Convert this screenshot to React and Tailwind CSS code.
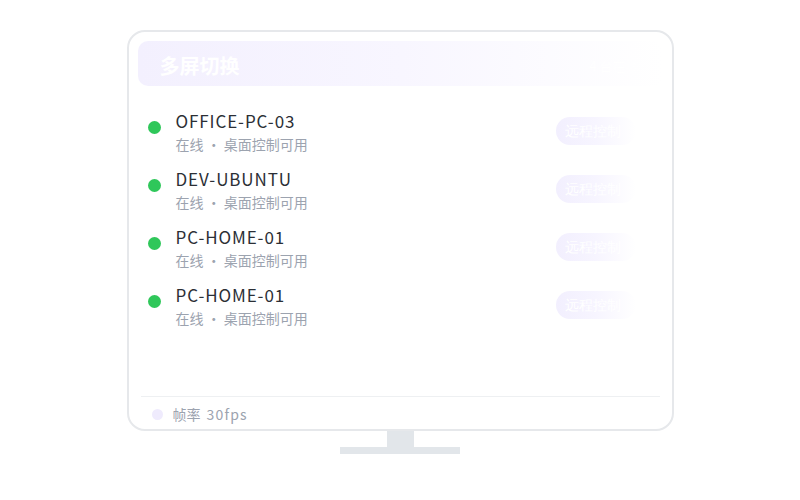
import React from 'react';

const devices = [
  { id: 1, name: 'OFFICE-PC-03' },
  { id: 2, name: 'DEV-UBUNTU' },
  { id: 3, name: 'PC-HOME-01' },
  { id: 4, name: 'PC-HOME-01' },
];

export default function App() {
  return <div className="w-[800px] h-[500px] bg-white overflow-hidden font-['Noto_Sans_CJK_SC',sans-serif]">
      <div className="flex flex-col items-center pt-[30px]">
        {/* 显示器外框 */}
        <div className="w-[547px] h-[401px] border-2 border-[#e6e8eb] rounded-[18px] bg-white flex flex-col pt-[9px] px-[9px]">
          {/* 标题栏 */}
          <div className="h-[45px] shrink-0 rounded-[10px] bg-gradient-to-r from-[#f3f0fe] via-[#f8f6ff] to-white flex items-center justify-between pt-[5px] pl-[22px] pr-[24px]">
            <span className="text-[20px] font-bold text-white">多屏切换</span>
            <span className="text-[13px] text-white">4 台在线</span>
          </div>

          {/* 设备列表 */}
          <div className="flex-1 flex flex-col gap-[14px] pt-[24px] pl-[10px] pr-[27px]">
            {devices.map(d => <div key={d.id} className="flex items-start">
                <span className="w-[13px] h-[13px] mt-[11px] rounded-full bg-[#2fc75a] shrink-0"></span>
                <div className="ml-[15px] flex-1 flex flex-col">
                  <span className="text-[17px] leading-[22px] text-[#2b2f36] tracking-[0.9px]">{d.name}</span>
                  <span className="mt-[2px] text-[14px] leading-[20px] text-[#9ca3af]">在线 · 桌面控制可用</span>
                </div>
                <div className="self-center w-[80px] h-[28px] rounded-full bg-gradient-to-r from-[#f2effe] via-[#f7f5ff] to-white flex items-center pl-[9px] mb-[2px]">
                  <span className="text-[14px] text-white font-['Liberation_Serif',serif] whitespace-nowrap">远程控制</span>
                </div>
              </div>)}
          </div>

          {/* 底部状态 */}
          <div className="h-[33px] shrink-0 mx-[3px] border-t border-[#eef0f2] flex items-center pt-[3px] pl-[11px] text-[14px] text-[#9ca3af]">
            <span className="w-[11px] h-[11px] rounded-full bg-[#efebfd]"></span>
            <span className="ml-[10px]">帧率</span>
            <span className="ml-[6px] tracking-[1.2px]">30fps</span>
          </div>
        </div>

        {/* 支架 */}
        <div className="w-[27px] h-[16px] bg-[#e2e6ea]"></div>
        <div className="w-[120px] h-[7px] bg-[#e2e6ea]"></div>
      </div>
    </div>;
}
